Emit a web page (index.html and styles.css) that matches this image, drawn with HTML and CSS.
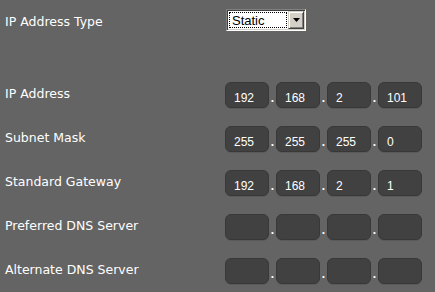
FILE: index.html
```html
<!DOCTYPE html>
<html lang="en">
<head>
<meta charset="utf-8">
<title>IP Settings</title>
<link rel="stylesheet" href="styles.css">
</head>
<body>
<div class="page">
  <div class="row row-type">
    <div class="label label-type">IP Address Type</div>
    <div class="select">
      <span class="select-value"><span class="select-text">Static</span></span>
      <span class="select-btn"><svg width="7" height="4" viewBox="0 0 7 4"><path d="M0 0H7L3.5 4Z" fill="#000"/></svg></span>
    </div>
  </div>
  <div class="row">
    <div class="label">IP Address</div>
    <div class="ip">
      <span class="oct">192</span><span class="sep">.</span><span class="oct">168</span><span class="sep">.</span><span class="oct">2</span><span class="sep">.</span><span class="oct">101</span>
    </div>
  </div>
  <div class="row">
    <div class="label">Subnet Mask</div>
    <div class="ip">
      <span class="oct">255</span><span class="sep">.</span><span class="oct">255</span><span class="sep">.</span><span class="oct">255</span><span class="sep">.</span><span class="oct">0</span>
    </div>
  </div>
  <div class="row">
    <div class="label">Standard Gateway</div>
    <div class="ip">
      <span class="oct">192</span><span class="sep">.</span><span class="oct">168</span><span class="sep">.</span><span class="oct">2</span><span class="sep">.</span><span class="oct">1</span>
    </div>
  </div>
  <div class="row">
    <div class="label">Preferred DNS Server</div>
    <div class="ip">
      <span class="oct"></span><span class="sep">.</span><span class="oct"></span><span class="sep">.</span><span class="oct"></span><span class="sep">.</span><span class="oct"></span>
    </div>
  </div>
  <div class="row">
    <div class="label">Alternate DNS Server</div>
    <div class="ip">
      <span class="oct"></span><span class="sep">.</span><span class="oct"></span><span class="sep">.</span><span class="oct"></span><span class="sep">.</span><span class="oct"></span>
    </div>
  </div>
</div>
</body>
</html>
```
FILE: styles.css
```css
html, body {
  margin: 0;
  padding: 0;
  background: #646464;
}
body {
  font-family: "DejaVu Sans", Verdana, sans-serif;
  color: #ffffff;
}
.page {
  padding-left: 5px;
}
.row {
  display: flex;
  align-items: center;
  height: 44px;
}
.row-type {
  height: 40px;
  margin-bottom: 33px;
}
.label {
  width: 220px;
  font-size: 12.5px;
  padding-bottom: 4px;
}
.label-type {
  padding-bottom: 0;
  padding-top: 2px;
}
.select {
  display: flex;
  margin-left: 1px;
  width: 80px;
  height: 22px;
  box-sizing: border-box;
  background: #ffffff;
  border: 1px solid;
  border-color: #808080 #ffffff #ffffff #808080;
  box-shadow: inset 1px 1px 0 #404040, inset -1px -1px 0 #d4d0c8;
  padding: 1px;
}
.select-value {
  flex: 1;
  display: flex;
  align-items: center;
  margin: 1px;
  border: 1px dotted #000;
  font-family: "Liberation Sans", Arial, sans-serif;
  font-size: 13px;
  color: #000;
  padding-left: 2px;
}
.select-btn {
  width: 14px;
  display: flex;
  align-items: center;
  justify-content: center;
  background: #d4d0c8;
  border: 1px solid;
  border-color: #d4d0c8 #404040 #404040 #d4d0c8;
  box-shadow: inset 1px 1px 0 #ffffff, inset -1px -1px 0 #808080;
}
.ip {
  display: flex;
  align-items: flex-start;
  font-family: "Liberation Sans", Arial, sans-serif;
  font-size: 12px;
}
.oct, .sep {
  height: 26px;
  box-sizing: border-box;
  padding-top: 3px;
  line-height: 24px;
  border: 1px solid transparent;
}
.oct {
  width: 44px;
  padding-left: 8px;
  border-radius: 6px;
  background: #414141;
  border-color: #383838;
  box-shadow: 0 1px 0 #5a5a5a;
  color: #ffffff;
}
.sep {
  width: 7px;
  text-align: center;
  font-weight: bold;
  color: #ffffff;
}
```
